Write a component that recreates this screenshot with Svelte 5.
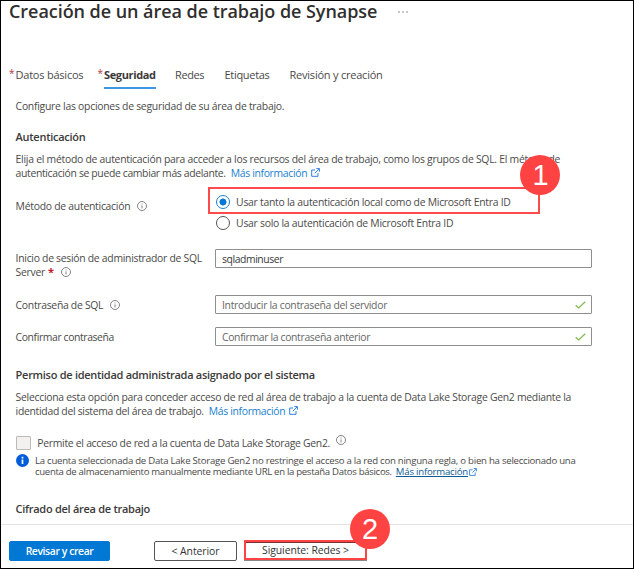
<script>
  const tabs = [
    { label: 'Datos básicos', required: true, cls: 'basics' },
    { label: 'Seguridad', required: true, cls: 'active' },
    { label: 'Redes', cls: 'networks' },
    { label: 'Etiquetas', cls: 'tags' },
    { label: 'Revisión y creación', cls: 'review' }
  ];
</script>

{#snippet info()}
  <svg class="info" viewBox="0 0 10 10" width="10" height="10"><circle cx="5" cy="5" r="4.5" /><path d="M5 4.4V7.4M5 2.5V3.4" /></svg>
{/snippet}

{#snippet external()}
  <svg class="ext" viewBox="0 0 9 9" width="9" height="9"><path d="M4 2H.7V8.3H7V5M5.3.6H8.4V3.7M8.2.8L3.8 5.2" /></svg>
{/snippet}

{#snippet check()}
  <svg class="check" viewBox="0 0 11 8" width="11" height="8"><path d="M.7 4.2L3.7 7L10.2.8" /></svg>
{/snippet}

<div class="page">
  <header>
    <h1>Creación de un área de trabajo de Synapse</h1>
    <svg class="more" viewBox="0 0 10 2" width="10" height="2"><circle cx="1" cy="1" r=".75" /><circle cx="5" cy="1" r=".75" /><circle cx="9" cy="1" r=".75" /></svg>
  </header>

  <nav>
    {#each tabs as tab}
      <div class="tab {tab.cls}">
        {#if tab.required}<span class="star">*</span>{/if}
        <span class="label">{tab.label}</span>
      </div>
    {/each}
  </nav>

  <main>
    <p class="desc">Configure las opciones de seguridad de su área de trabajo.</p>

    <h2 class="auth">Autenticación</h2>
    <div class="para">
      <p>Elija el método de autenticación para acceder a los recursos del área de trabajo, como los grupos de SQL. El método de</p>
      <p class="t34"><span class="first">autenticación se puede cambiar más adelante.</span><a href="#mas">Más información</a>{@render external()}</p>
    </div>

    <div class="method">
      <div class="name"><span>Método de autenticación</span>{@render info()}</div>
      <div class="options">
        <label class="option picked"><i class="radio on"></i><span>Usar tanto la autenticación local como de Microsoft Entra ID</span><b class="badge">1</b></label>
        <label class="option"><i class="radio"></i><span>Usar solo la autenticación de Microsoft Entra ID</span></label>
      </div>
    </div>

    <div class="field login">
      <div class="name two">
        <p class="t28">Inicio de sesión de administrador de SQL</p>
        <p>Server <em>*</em>{@render info()}</p>
      </div>
      <div class="input value"><span class="t42">sqladminuser</span></div>
    </div>
    <div class="field pass">
      <div class="name"><span class="t30">Contraseña de SQL</span>{@render info()}</div>
      <div class="input"><span class="t30">Introducir la contraseña del servidor</span>{@render check()}</div>
    </div>
    <div class="field confirm">
      <div class="name"><span class="t39">Confirmar contraseña</span></div>
      <div class="input"><span class="t34">Confirmar la contraseña anterior</span>{@render check()}</div>
    </div>

    <h2 class="perm">Permiso de identidad administrada asignado por el sistema</h2>
    <div class="para second">
      <p class="t27">Selecciona esta opción para conceder acceso de red al área de trabajo a la cuenta de Data Lake Storage Gen2 mediante la</p>
      <p class="t30"><span class="first">identidad del sistema del área de trabajo.</span><a href="#mas">Más información</a>{@render external()}</p>
    </div>

    <label class="allow"><i class="box"></i><span class="t28">Permite el acceso de red a la cuenta de Data Lake Storage Gen2.</span>{@render info()}</label>
    <div class="note">
      <svg viewBox="0 0 13 13" width="13" height="13"><circle cx="6.5" cy="6.5" r="6.5" fill="#015cda" /><path d="M6.5 5.5V10M6.5 2.8V4.5" stroke="#fff" stroke-width="1.7" /></svg>
      <div>
        <p>La cuenta seleccionada de Data Lake Storage Gen2 no restringe el acceso a la red con ninguna regla, o bien ha seleccionado una</p>
        <p class="t31"><span class="first">cuenta de almacenamiento manualmente mediante URL en la pestaña Datos básicos.</span><a href="#mas">Más información</a>{@render external()}</p>
      </div>
    </div>

    <h2 class="cipher">Cifrado del área de trabajo</h2>
  </main>

  <footer>
    <button class="primary">Revisar y crear</button>
    <button class="prev">&lt; Anterior</button>
    <button class="next">Siguiente: Redes &gt;<b class="badge">2</b></button>
  </footer>
</div>

<style>
  :global(body) { background: #fff; }
  .page {
    box-sizing: border-box; width: 634px; height: 569px; overflow: hidden;
    border: 1px solid #000;
    display: flex; flex-direction: column;
    font-family: "Open Sans", "Noto Sans", sans-serif;
    font-size: 10.4px; letter-spacing: -.26px; line-height: 14px; color: #4b4a49;
    white-space: nowrap;
  }
  p, h1, h2 { margin: 0; }
  header { display: flex; align-items: center; height: 22px; padding-left: 8px; }
  h1 { font-size: 18px; font-weight: 600; letter-spacing: -.05px; line-height: 20px; height: 22px; color: #302f2e; }
  .more { fill: #777; margin-left: 21px; }

  nav { display: flex; height: 25px; margin-top: 41px; padding-left: 8px; font-size: 11px; line-height: 21px; letter-spacing: -.22px; }
  .tab { display: flex; }
  .star { width: 6.5px; color: #b3363d; font-size: 10px; line-height: 19px; }
  .label { box-sizing: border-box; height: 25px; }
  .active { margin-left: 14px; font-weight: 700; letter-spacing: -.36px; color: #3b3a39; }
  .active .label { width: 52px; border-bottom: 2px solid #4099e0; }
  .active .star { font-weight: 400; }
  .basics .label { width: 68px; }
  .networks { margin-left: 19px; letter-spacing: -.4px; width: 30.5px; }
  .tags { margin-left: 19px; letter-spacing: -.3px; width: 46px; }
  .review { margin-left: 19px; }

  main { flex: 1; padding-left: 14.6px; }
  .desc { margin-top: 10px; }
  h2 { font-size: 11px; font-weight: 600; line-height: 16px; color: #3b3a39; letter-spacing: -.28px; }
  .auth { margin-top: 16px; }
  .para { margin-top: 7px; }
  .para p { display: flex; align-items: center; line-height: 14px; height: 14px; }
  .para .first { margin-right: 5px; }
  a { color: #1a7fd0; text-decoration: none; letter-spacing: -.33px; }
  .ext { fill: none; stroke: #2f7fe0; stroke-width: 1; margin: -2px 0 0 4px; }
  .info { fill: none; stroke: #666; stroke-width: .8; flex: none; }
  .t27 { letter-spacing: -.274px; }
  .t28 { letter-spacing: -.284px; }
  .t30 { letter-spacing: -.295px; }
  .t31 { letter-spacing: -.314px; }
  .t34 { letter-spacing: -.34px; }
  .t39 { letter-spacing: -.39px; }
  .t42 { letter-spacing: -.42px; }

  .method { display: flex; margin-top: 7px; }
  .name { width: 199.4px; display: flex; align-items: center; gap: 7px; }
  .method .name { height: 37px; width: 192.4px; }
  .option { position: relative; box-sizing: border-box; display: flex; align-items: center; gap: 6.5px; height: 16px; padding-left: 7.6px; }
  .picked { width: 332px; height: 27px; border: 2px solid #fd4a4a; padding: 2px 0 0 5.6px; margin-bottom: 1px; }
  .radio { box-sizing: border-box; width: 14px; height: 14px; border: 1px solid #555; border-radius: 50%; }
  .on { border-color: #1a7fd0; background: radial-gradient(circle, #0078d4 3.2px, #fff 3.8px); }
  .badge {
    position: absolute; width: 40px; height: 40px; border-radius: 50%; background: #ff4343; color: #fff;
    font: 400 29px/41px "Liberation Sans", Arial, sans-serif; letter-spacing: 0; text-align: center;
  }
  .picked .badge { left: 310.5px; top: -34px; }

  .field { display: flex; align-items: center; height: 19px; }
  .input { box-sizing: border-box; width: 377px; height: 19px; border: 1px solid #8f8e8d; border-radius: 1px; display: flex; align-items: center; justify-content: space-between; padding: 0 5px 0 6px; color: #666; }
  .value { color: #3b3a39; }
  .check { fill: none; stroke: #7fba4a; stroke-width: 1.2; }
  .login { margin-top: 18px; height: 33px; align-items: flex-start; }
  .two { display: block; padding-top: 2px; }
  .two p { height: 14px; display: flex; align-items: center; }
  em { color: #c02030; font-style: normal; font-weight: 700; font-size: 11px; line-height: 12px; height: 12px; margin: 0 7px 0 3px; }
  .pass { margin-top: 13px; }
  .confirm { margin-top: 13px; }

  .perm { margin-top: 21px; }
  .second { margin-top: 7px; }
  .allow { display: flex; align-items: center; height: 16px; margin-top: 17px; }
  .box { box-sizing: border-box; width: 15px; height: 14px; border: 1px solid #bdbbb9; background: #f2f1f0; border-radius: 1px; margin: 0 6.3px 0 .4px; }
  .allow .info { margin: -6px 0 0 6px; }
  .note { display: flex; font-size: 9.6px; letter-spacing: -.246px; line-height: 12px; margin-top: 3px; }
  .note > svg { margin-right: 6.4px; }
  .note > div { padding-top: 1px; }
  .note p { height: 11.5px; display: flex; align-items: center; }
  .note .first { margin-right: 4px; }
  .note a { letter-spacing: -.2px; color: #0f5a93; text-decoration: underline; }
  .note .ext { margin: 0 0 0 1px; width: 8px; height: 8px; }
  .cipher { margin-top: 23px; }

  footer { box-sizing: border-box; height: 44px; border-top: 1px solid #e3e2e1; display: flex; align-items: flex-start; padding: 16px 0 0 8px; }
  button { position: relative; box-sizing: border-box; height: 20px; padding: 0; margin: 0; border: 1px solid #555; border-radius: 2px; background: #fff; font: inherit; letter-spacing: -.07px; line-height: 17px; color: #333; }
  .primary { width: 101px; background: #0078d4; border-color: #0078d4; color: #fff; font-weight: 600; letter-spacing: -.4px; }
  .prev { width: 83px; margin-left: 44px; }
  .next { width: 123px; height: 20px; margin: -1px 0 0 7px; border: 2px solid #fd4343; border-radius: 0; box-shadow: inset 0 1px 0 #7a3030, 0 1px 0 #888; padding-top: 1px; line-height: 15px; }
  .next .badge { left: 104px; top: -33px; }
</style>
